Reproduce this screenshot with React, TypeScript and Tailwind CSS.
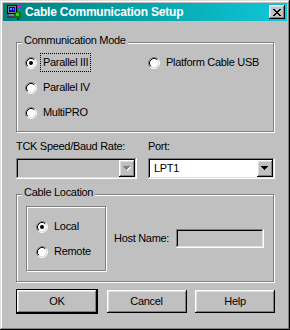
import React from 'react';

const raised = 'shadow-[inset_-1px_-1px_#000,inset_1px_1px_#fff,inset_-2px_-2px_#808080,inset_2px_2px_#dfdfdf]';
const sunken = 'shadow-[inset_-1px_-1px_#fff,inset_1px_1px_#808080,inset_-2px_-2px_#dfdfdf,inset_2px_2px_#000]';
const etched = 'border border-[#808080] shadow-[inset_1px_1px_#fff,1px_1px_#fff]';

const Radio = ({ checked }: { checked?: boolean }) => (
    <svg width="12" height="12" viewBox="0 0 12 12" className="shrink-0">
        <circle cx="6" cy="6" r="4.5" fill="#fff" />
        <path d="M2.11 9.89A5.5 5.5 0 0 1 9.89 2.11" fill="none" stroke="#808080" />
        <path d="M9.89 2.11A5.5 5.5 0 0 1 2.11 9.89" fill="none" stroke="#fff" />
        <path d="M2.82 9.18A4.5 4.5 0 0 1 9.18 2.82" fill="none" stroke="#000" />
        <path d="M9.18 2.82A4.5 4.5 0 0 1 2.82 9.18" fill="none" stroke="#dfdfdf" />
        {checked && <circle cx="6" cy="6" r="2" fill="#000" />}
    </svg>
);

const RadioRow = ({ label, checked, focus }: { label: string, checked?: boolean, focus?: boolean }) => (
    <div className="flex items-center h-[25px]">
        <Radio checked={checked} />
        <span className={`ml-[3px] h-[19px] px-[2px] flex items-center border ${focus ? 'border-dotted border-black' : 'border-transparent'}`}>
            {label}
        </span>
    </div>
);

const Arrow = ({ disabled }: { disabled?: boolean }) => (
    <svg width="8" height="5" viewBox="0 0 8 5" shapeRendering="crispEdges">
        {disabled && (
            <g fill="#fff">
                <rect x="1" y="1" width="7" height="1" />
                <rect x="2" y="2" width="5" height="1" />
                <rect x="3" y="3" width="3" height="1" />
                <rect x="4" y="4" width="1" height="1" />
            </g>
        )}
        <g fill={disabled ? '#808080' : '#000'}>
            <rect x="0" y="0" width="7" height="1" />
            <rect x="1" y="1" width="5" height="1" />
            <rect x="2" y="2" width="3" height="1" />
            <rect x="3" y="3" width="1" height="1" />
        </g>
    </svg>
);

const Combo = ({ value, disabled, width }: { value?: string, disabled?: boolean, width: string }) => (
    <div className={`${width} h-[21px] p-[2px] flex ${sunken} ${disabled ? 'bg-[#c0c0c0]' : 'bg-white'}`}>
        <div className="flex-1 flex items-center pl-[4px]">{value}</div>
        <div className={`w-[16px] h-[17px] bg-[#c0c0c0] flex items-center justify-center ${raised}`}>
            <Arrow disabled={disabled} />
        </div>
    </div>
);

const Button = ({ label, isDefault }: { label: string, isDefault?: boolean }) => (
    <div className={isDefault ? 'border border-black' : ''}>
        <div className={`w-[80px] h-[23px] flex items-center justify-center ${raised}`}>{label}</div>
    </div>
);

const AppIcon = () => (
    <svg width="16" height="16" viewBox="0 0 16 16" shapeRendering="crispEdges">
        <rect x="1" y="1" width="10" height="9" fill="#000" />
        <rect x="2" y="2" width="8" height="7" fill="#808080" />
        <rect x="3" y="3" width="6" height="5" fill="#0000c0" />
        <rect x="4" y="4" width="2" height="2" fill="#00c0ff" />
        <rect x="7" y="4" width="1" height="2" fill="#00c0ff" />
        <rect x="3" y="10" width="6" height="2" fill="#808080" />
        <rect x="1" y="12" width="9" height="2" fill="#404040" />
        <rect x="13" y="2" width="1" height="5" fill="#ff00ff" />
        <rect x="12" y="2" width="3" height="1" fill="#ff00ff" />
        <rect x="9" y="8" width="6" height="6" fill="#008000" />
        <rect x="10" y="9" width="3" height="3" fill="#40c040" />
        <rect x="8" y="10" width="1" height="2" fill="#008000" />
        <rect x="11" y="14" width="2" height="2" fill="#004000" />
    </svg>
);

export default function App() {
    return (
        <div className={`w-[290px] h-[330px] bg-[#c0c0c0] p-[3px] font-['Liberation_Sans',Arial,sans-serif] text-[11px] leading-[13px] tracking-[-0.3px] text-black shadow-[inset_-1px_-1px_#000,inset_1px_1px_#dfdfdf,inset_-2px_-2px_#808080,inset_2px_2px_#fff]`}>
            {/* Title bar */}
            <div className="h-[18px] flex items-center bg-linear-to-r from-[#008080] to-[#10c8d8] pl-[3px] pr-[2px]">
                <AppIcon />
                <span className="ml-[3px] text-white font-bold text-[12px] tracking-[-0.2px]">Cable Communication Setup</span>
                <div className={`ml-auto w-[16px] h-[14px] bg-[#c0c0c0] flex items-center justify-center ${raised}`}>
                    <svg width="8" height="7" viewBox="0 0 8 7" shapeRendering="crispEdges" fill="#000">
                        <rect x="0" y="0" width="2" height="1" /><rect x="6" y="0" width="2" height="1" />
                        <rect x="1" y="1" width="2" height="1" /><rect x="5" y="1" width="2" height="1" />
                        <rect x="2" y="2" width="4" height="1" />
                        <rect x="3" y="3" width="2" height="1" />
                        <rect x="2" y="4" width="4" height="1" />
                        <rect x="1" y="5" width="2" height="1" /><rect x="5" y="5" width="2" height="1" />
                        <rect x="0" y="6" width="2" height="1" /><rect x="6" y="6" width="2" height="1" />
                    </svg>
                </div>
            </div>

            <div className="pl-[13px] pr-[12px]">
                {/* Communication Mode */}
                <div className={`relative mt-[21px] w-[258px] h-[90px] pt-[7px] pl-[8px] flex ${etched}`}>
                    <span className="absolute -top-[9px] left-[5px] bg-[#c0c0c0] px-[2px]">Communication Mode</span>
                    <div className="w-[123px]">
                        <RadioRow label="Parallel III" checked focus />
                        <RadioRow label="Parallel IV" />
                        <RadioRow label="MultiPRO" />
                    </div>
                    <div>
                        <RadioRow label="Platform Cable USB" />
                    </div>
                </div>

                {/* Speed / Port */}
                <div className="flex mt-[8px] h-[13px]">
                    <span className="w-[132px]">TCK Speed/Baud Rate:</span>
                    <span>Port:</span>
                </div>
                <div className="flex justify-between mt-[5px]">
                    <Combo width="w-[121px]" disabled />
                    <Combo width="w-[127px]" value="LPT1" />
                </div>

                {/* Cable Location */}
                <div className={`relative mt-[15px] w-[258px] pt-[11px] pb-[10px] pl-[9px] flex items-center ${etched}`}>
                    <span className="absolute -top-[9px] left-[5px] bg-[#c0c0c0] px-[2px]">Cable Location</span>
                    <div className={`w-[80px] h-[65px] pt-[7px] pl-[9px] ${etched}`}>
                        <div className="flex items-center h-[25px]">
                            <Radio checked />
                            <span className="ml-[6px]">Local</span>
                        </div>
                        <div className="flex items-center h-[25px]">
                            <Radio />
                            <span className="ml-[6px]">Remote</span>
                        </div>
                    </div>
                    <span className="ml-[8px] w-[62px]">Host Name:</span>
                    <div className={`w-[88px] h-[19px] bg-[#c0c0c0] ${sunken}`} />
                </div>

                {/* Buttons */}
                <div className="flex items-center justify-between mt-[7px]">
                    <Button label="OK" isDefault />
                    <Button label="Cancel" />
                    <Button label="Help" />
                </div>
            </div>
        </div>
    );
}
